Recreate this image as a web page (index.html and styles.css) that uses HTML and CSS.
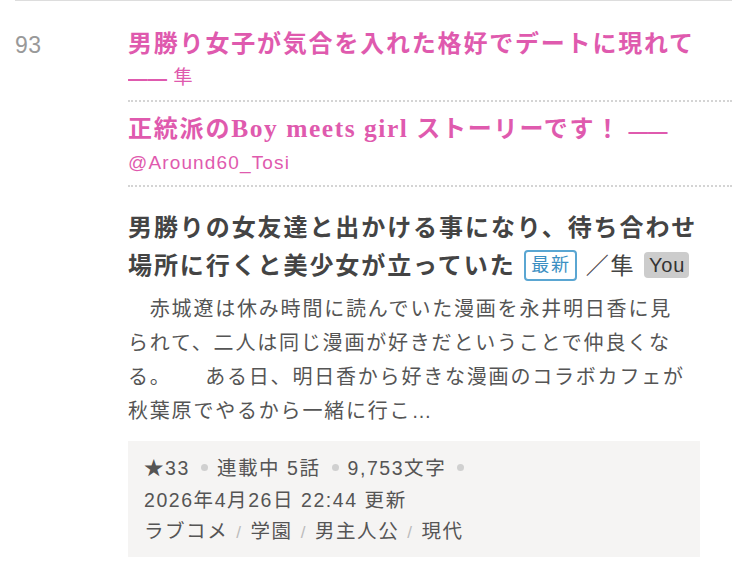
FILE: index.html
```html
<!DOCTYPE html>
<html lang="ja">
<head>
<meta charset="utf-8">
<link rel="stylesheet" href="styles.css">
</head>
<body>
<div class="item">
  <div class="rank">93</div>
  <div class="content">
    <div class="reviews">
      <p class="review"><span class="catch">男勝り女子が気合を入れた格好でデートに現れて</span> <span class="by"><span class="dash">——</span> 隼</span></p>
      <p class="review"><span class="catch">正統派の<span class="latin">Boy meets girl</span> ストーリーです！</span> <span class="by"><span class="dash">——</span> @Around60_Tosi</span></p>
    </div>
    <h2 class="title">男勝りの女友達と出かける事になり、待ち合わせ場所に行くと美少女が立っていた <span class="new">最新</span> <span class="author">／隼</span> <span class="you">You</span></h2>
    <p class="desc">　赤城遼は休み時間に読んでいた漫画を永井明日香に見られて、二人は同じ漫画が好きだということで仲良くなる。　　ある日、明日香から好きな漫画のコラボカフェが秋葉原でやるから一緒に行こ…</p>
    <div class="meta">
      <div class="meta-line">★33<span class="dot"></span>連載中 5話<span class="dot"></span>9,753文字<span class="dot"></span></div>
      <div class="meta-line">2026年4月26日 22:44 更新</div>
      <div class="meta-line">ラブコメ<span class="sep">/</span>学園<span class="sep">/</span>男主人公<span class="sep">/</span>現代</div>
    </div>
  </div>
</div>
</body>
</html>
```
FILE: styles.css
```css
html, body {
  margin: 0;
  padding: 0;
  background: #fff;
}
body {
  font-family: "Liberation Sans", "Noto Sans CJK JP", sans-serif;
  color: #444;
  letter-spacing: 0.08em;
}
.item {
  margin-left: 15px;
  border-top: 1px solid #ddd;
  display: flex;
}
.rank {
  width: 113px;
  flex: none;
  font-size: 23px;
  color: #999;
  letter-spacing: 0.02em;
  padding-top: 30px;
  line-height: 28px;
}
.content {
  width: 572px;
  flex: none;
}
.reviews {
  margin-top: 16px;
}
.review {
  margin: 0 -32px 0 0;
  padding: 11px 32px 8px 0;
  font-family: "Liberation Serif", "Noto Sans CJK JP", serif;
  font-size: 24px;
  font-weight: bold;
  line-height: 32px;
  color: #df5aae;
  border-bottom: 2px dotted #d4d4d4;
}
.catch {
  letter-spacing: 0.075em;
}
.latin {
  font-size: 25.5px;
  letter-spacing: 0.06em;
}
.by {
  font-family: "Liberation Sans", "Noto Sans CJK JP", sans-serif;
  font-weight: normal;
  font-size: 19px;
  line-height: 20px;
  letter-spacing: 0.06em;
}
.dash {
  display: inline-block;
  font-size: 19.5px;
  letter-spacing: 0;
  transform: scaleY(1.5);
}
.title {
  margin: 22px 0 0;
  font-size: 24px;
  line-height: 38px;
  font-weight: bold;
  color: #444;
  letter-spacing: 0.08em;
}
.new {
  display: inline-block;
  font-size: 18px;
  font-weight: normal;
  line-height: 27px;
  color: #3b8fc2;
  border: 2px solid #5aa6d2;
  border-radius: 4px;
  padding: 0 4px 0 5px;
  vertical-align: 3px;
}
.author {
  font-weight: normal;
  font-size: 23px;
}
.you {
  display: inline-block;
  font-size: 20px;
  font-weight: normal;
  line-height: 26px;
  background: #ccc;
  color: #333;
  border-radius: 4px;
  padding: 0 4px 0 5px;
  letter-spacing: 0.04em;
  vertical-align: 2px;
}
.desc {
  margin: 7px 15px 0 0;
  font-size: 20px;
  line-height: 34px;
  color: #555;
  letter-spacing: 0.09em;
}
.meta {
  margin-top: 13px;
  background: #f5f4f3;
  padding: 12px 16px 8.5px;
  font-size: 19.5px;
  line-height: 31.5px;
  color: #555;
  letter-spacing: 0.08em;
}
.dot {
  display: inline-block;
  width: 7px;
  height: 7px;
  border-radius: 50%;
  background: #d0d0d0;
  margin: 0 9px 0 11px;
  vertical-align: 4px;
}
.sep {
  color: #bbb;
  margin: 0 8px;
  font-size: 17px;
}
```
